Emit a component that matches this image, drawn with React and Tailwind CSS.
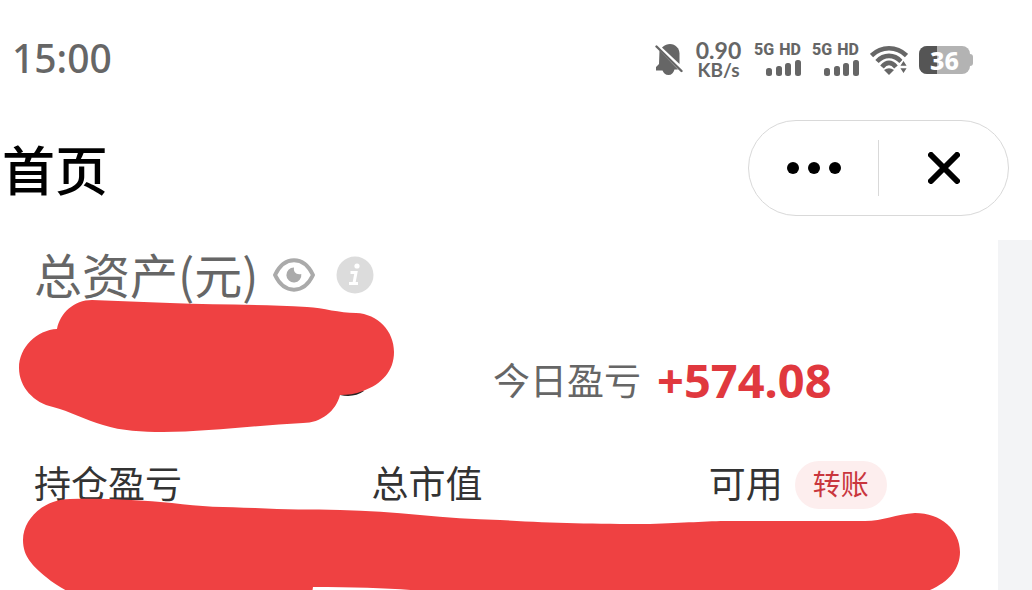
const latin = "font-['Noto_Sans','Noto_Sans_CJK_SC',sans-serif]";
const chinese = "font-['Noto_Sans_CJK_SC',sans-serif]";

function MutedBell() {
  return (
    <svg className="h-8 w-7 shrink-0" viewBox="0 0 28 32" fill="#666">
      <path d="M7 3.500C10 .8 12.500 0 15 0C20.500 0 24.500 4.500 24.500 9.500V20z" />
      <path d="M4.500 6.500 23 25.500H19.500C18.500 29 16.500 31 13.500 31S8.500 29 7.500 26.500H1V23L4 20z" />
      <path d="M1.500 2.500 26.500 27" stroke="#666" strokeWidth="2.400" strokeLinecap="round" />
    </svg>
  );
}

function Signal() {
  return (
    <div className="flex w-[47px] shrink-0 flex-col items-end gap-1">
      <div className="flex w-full justify-between font-[Roboto,sans-serif] text-base leading-3 font-extrabold">
        <span>5G</span>
        <span>HD</span>
      </div>
      <svg className="h-4 w-9" viewBox="0 0 36 16" fill="#666">
        <rect x="1" y="8" width="6" height="8" rx="2.500" />
        <rect x="11" y="6" width="6" height="10" rx="2.500" />
        <rect x="20" y="3" width="6" height="13" rx="2.500" />
        <rect x="30" y="0" width="6" height="16" rx="2.500" />
      </svg>
    </div>
  );
}

function Wifi() {
  return (
    <svg className="h-[30px] w-[38px] shrink-0" viewBox="0 0 38 30" fill="none" stroke="#666" strokeWidth="4.600">
      <path d="M1.500 10.500C11.500.8 26.500.8 36.500 10.500" />
      <path d="M7 16.500C14 9 24 9 31 16.500" />
      <path d="M12 22C16.500 16.500 21.500 16.500 26 22" />
      <path d="M14 25q5-3.500 10 0l-5 5z" fill="#666" stroke="none" />
      <path d="M29 21.500l4.500-7 4.500 7zM29 22.500l4.500 7 4.500-7z" fill="#666" stroke="#fff" strokeWidth="1.500" />
    </svg>
  );
}

function Battery({ level }) {
  return (
    <div className="flex shrink-0 items-center">
      <div className="relative h-7 w-[51px] rounded-lg bg-[#b3b3b3]">
        <div className="h-full rounded-l-lg bg-[#555]" style={{ width: `${level}%` }} />
        <span className="absolute inset-0 text-center text-[25px] leading-7 font-extrabold text-white">{level}</span>
      </div>
      <div className="h-3 w-[3px] rounded-r-full bg-[#b3b3b3]" />
    </div>
  );
}

function StatusBar() {
  return (
    <div className={`flex h-[120px] items-center justify-between pr-[59px] pl-3 text-[#666] ${latin}`}>
      <span className="pb-1 text-[39px] font-medium">15:00</span>
      <div className="flex items-center gap-[11px]">
        <MutedBell />
        <div className="flex w-[49px] flex-col items-center font-[Lato,sans-serif] font-bold">
          <span className="text-[23px] leading-5">0.90</span>
          <span className="text-[19px] leading-5">KB/s</span>
        </div>
        <Signal />
        <Signal />
        <Wifi />
        <Battery level={36} />
      </div>
    </div>
  );
}

function TitleBar() {
  return (
    <header className="flex h-24 items-center justify-between pr-[23px] pl-[2px]">
      <h1 className="text-[53px] leading-none font-medium text-black">首页</h1>
      <div className="flex h-24 w-[261px] items-center rounded-full border border-[#d9d9d9]">
        <button type="button" aria-label="更多" className="flex h-full flex-1 items-center justify-center gap-[9px]">
          <span className="size-3 rounded-full bg-black" />
          <span className="size-3 rounded-full bg-black" />
          <span className="size-3 rounded-full bg-black" />
        </button>
        <div className="h-14 w-px bg-[#d9d9d9]" />
        <button type="button" aria-label="关闭" className="flex h-full flex-1 items-center justify-center">
          <svg className="size-8" viewBox="0 0 32 32" stroke="#000" strokeWidth="6" strokeLinecap="round">
            <path d="M3 3l26 26M29 3 3 29" />
          </svg>
        </button>
      </div>
    </header>
  );
}

function EyeIcon() {
  return (
    <svg className="h-9 w-11" viewBox="0 0 44 36" fill="none">
      <path d="M3 18C7.500 8.500 14 3.300 22 3.300S36.500 8.500 41 18C36.500 27.500 30 32.700 22 32.700S7.500 27.500 3 18z" stroke="#aaa" strokeWidth="4" strokeLinejoin="round" />
      <path d="M22 10.500c-.8 4.500 2 7.500 7.300 6.500A7.500 7.500 0 1 1 22 10.500z" fill="#aaa" />
    </svg>
  );
}

function InfoIcon() {
  return (
    <svg className="size-[38px]" viewBox="0 0 38 38">
      <circle cx="19" cy="19" r="18.500" fill="#dcdcdc" />
      <circle cx="21" cy="10" r="2.600" fill="#fff" />
      <path d="M14.500 16.500h5.500l-2 10.500M13 27.500h9" fill="none" stroke="#fff" strokeWidth="3" />
    </svg>
  );
}

// Marker strokes that hide the private amounts
function AssetMask() {
  return (
    <svg className="pointer-events-none absolute top-14 left-4 h-[140px] w-[384px]" viewBox="16 296 384 140">
      <path d="M340 395q14 3 24-4l-10-6z" fill="#222" />
      <path
        d="M57 329C60 313 74 300 92 300C118 301 143 302 170 303C215 305 260 304 307 307C324 308 339 313 356 313C378 314 394 331 394 352C394 371 382 384 363 391C355 394 348 395 340 395C336 411 321 423 303 423C258 425 207 432 163 432C142 432 122 431 103 425C86 420 69 411 53 407C34 403 19 387 19 368C19 347 37 330 57 329Z"
        fill="#ef4142"
      />
    </svg>
  );
}

function DetailMask() {
  return (
    <svg className="pointer-events-none absolute top-64 left-5 h-[104px] w-[944px]" viewBox="20 496 944 104">
      <path
        d="M70 499C105 498 140 500 172 503C200 507 225 507 255 508C285 510 312 509 340 510C395 511 445 519 500 520C550 523 590 524 650 524C685 523 705 521 730 521H865C883 521 896 514 915 513C941 513 960 530 960 552C960 570 947 584 925 592V600H480C440 591 395 587 313 587L311 600H84C70 592 59 588 46 577C33 566 23 557 23 540C23 518 45 499 70 499Z"
        fill="#ef4142"
      />
    </svg>
  );
}

function App() {
  return (
    <div className={`flex min-h-screen flex-col bg-white ${chinese}`}>
      <StatusBar />
      <TitleBar />
      <main className="mt-6 flex flex-1 bg-[#f3f4f6] pr-[34px]">
        <section className="relative flex-1 overflow-hidden bg-white pl-[34px]">
          <div className="flex h-[70px] items-center text-[#666]">
            <h2 className="pb-1 text-5xl leading-none font-normal">总资产(元)</h2>
            <button type="button" aria-label="隐藏金额" className="ml-3.5">
              <EyeIcon />
            </button>
            <button type="button" aria-label="说明" className="ml-5">
              <InfoIcon />
            </button>
          </div>

          <div className="grid h-36 grid-cols-[10fr_11fr] items-center">
            <div />
            <div className="flex items-center gap-4 pb-1">
              <span className="text-[37px] text-[#666]">今日盈亏</span>
              <span className={`text-[47px] leading-none font-bold text-[#e0383e] ${latin}`}>+574.08</span>
            </div>
          </div>

          <div className="grid h-[62px] grid-cols-[7fr_7fr_6fr] items-center text-[37px] text-[#333]">
            <span className="pb-1">持仓盈亏</span>
            <span className="pb-1">总市值</span>
            <div className="flex items-center gap-3">
              <span className="pb-1">可用</span>
              <button type="button" className="h-12 rounded-full bg-[#fdeeee] px-[18px] pb-1 text-[28px] leading-none text-[#c9363d]">
                转账
              </button>
            </div>
          </div>

          <AssetMask />
          <DetailMask />
        </section>
      </main>
    </div>
  );
}

export default App;
